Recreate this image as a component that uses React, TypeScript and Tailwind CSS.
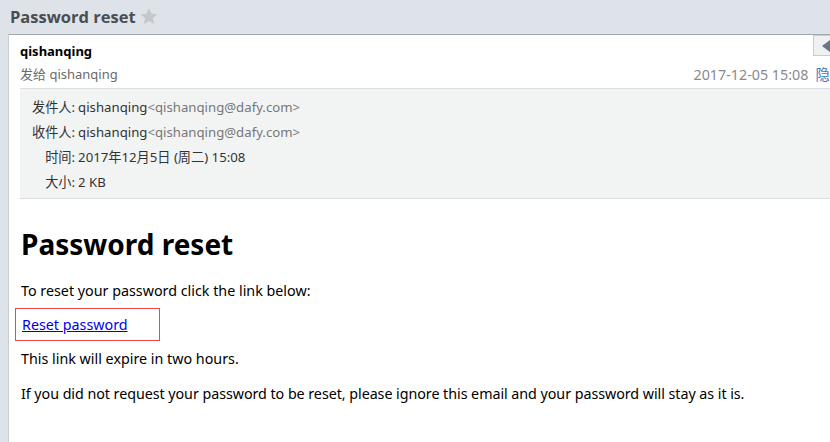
import React from "react";

export default function App() {
  const cjk = { fontFamily: '"Noto Sans", "Noto Sans CJK SC", sans-serif' };
  return (
    <div className="w-[830px] h-[442px] overflow-hidden bg-[#dde3e9]" style={cjk}>
      <div className="h-[34px] flex items-center pl-[10px] gap-[3px]">
        <span className="text-[16.5px] font-bold text-[#4a4d52] leading-none" style={{ fontFamily: '"Open Sans", sans-serif' }}>
          Password reset
        </span>
        <svg width="20" height="19" viewBox="0 0 24 24" className="mt-[-1px]">
          <path d="M12 1.5l3.1 6.9 7.4.7-5.6 5 1.7 7.4L12 17.7l-6.6 3.8 1.7-7.4-5.6-5 7.4-.7z" fill="#c4c8cd" />
        </svg>
      </div>
      <div className="ml-[8px] h-[408px] bg-white border-t border-t-[#a3a7ab] border-l border-l-[#c9cdd1] relative overflow-hidden">
        <div className="absolute right-0 top-0 w-[17px] h-[21px] bg-[#eef0f2] border border-[#c9cdd1] border-r-0 flex items-center justify-end z-10">
          <svg width="10" height="12" viewBox="0 0 10 12"><path d="M10 0L2 6l8 6z" fill="#6b7480" /></svg>
        </div>
        <div className="pl-[11px] pt-[7px]">
          <div className="text-[13px] font-bold text-black leading-[18px]">qishanqing</div>
          <div className="flex justify-between items-center mt-[5px] h-[20px]">
            <span className="text-[13px] text-[#6a6a6a]">发给 qishanqing</span>
            <span className="text-[14.3px] text-[#8a8a8a] whitespace-nowrap mr-[-14px]">
              2017-12-05 15:08<span className="ml-[7px] text-[#3a78c3]">隐藏</span>
            </span>
          </div>
        </div>
        <div className="ml-[11px] mt-[3px] h-[111px] bg-[#f2f4f4] border-t border-b border-[#dcdfe1] pt-[6px] text-[13.2px] text-[#333]">
          <div className="grid grid-cols-[max-content_1fr] pl-[12px] gap-x-[3px]">
            {[
              ["发件人:", <>qishanqing<span className="text-[#777]">&lt;qishanqing@dafy.com&gt;</span></>],
              ["收件人:", <>qishanqing<span className="text-[#777]">&lt;qishanqing@dafy.com&gt;</span></>],
              ["时间:", "2017年12月5日 (周二) 15:08"],
              ["大小:", "2 KB"],
            ].map(([l, v], i) => (
              <React.Fragment key={i}>
                <div className="text-right h-[25px] leading-[25px]">{l}</div>
                <div className="h-[25px] leading-[25px]">{v}</div>
              </React.Fragment>
            ))}
          </div>
        </div>
        <div className="pl-[12px] pt-[27px] text-black">
          <h1 className="text-[28px] font-bold leading-[36px]">Password reset</h1>
          <p className="text-[14.3px] mt-[19px] leading-[20px]">To reset your password click the link below:</p>
          <div className="mt-[7px] ml-[-6px] w-[145px] h-[33px] border border-solid border-[rgb(240,72,76)] flex items-center pl-[6px]">
            <a href="#" className="text-[14.3px] text-[#0000ee] underline leading-[20px]">Reset password</a>
          </div>
          <p className="text-[14.3px] mt-[8px] leading-[20px]">This link will expire in two hours.</p>
          <p className="text-[14.3px] mt-[15px] leading-[20px] tracking-[-0.05px]">
            If you did not request your password to be reset, please ignore this email and your password will stay as it is.
          </p>
        </div>
      </div>
    </div>
  );
}
